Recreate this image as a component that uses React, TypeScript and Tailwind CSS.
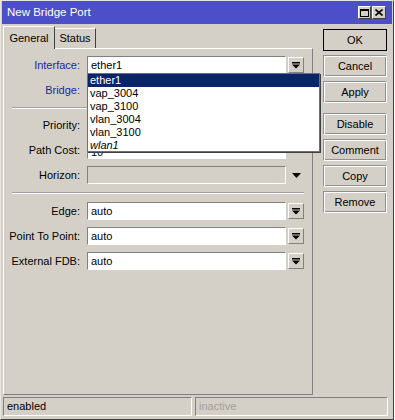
import React from "react";

const font = { fontFamily: '"Liberation Sans", Arial, sans-serif' };

const DropIcon = () => (
    <svg width="8" height="7" viewBox="0 0 8 7">
        <rect x="0" y="0" width="8" height="1.5" fill="#000" />
        <polygon points="0,2.5 8,2.5 4,6.5" fill="#000" />
    </svg>
);

const Field = ({ value, drop = true }: { value: string; drop?: boolean }) => (
    <div className="flex items-center gap-[2px]">
        <div className="w-[199px] h-[18px] bg-white border border-t-[#808080] border-l-[#808080] border-b-white border-r-white flex items-center pl-[3px] text-[11px] text-black">
            {value}
        </div>
        {drop && (
            <div className="w-[16px] h-[16px] border border-t-white border-l-white border-b-[#808080] border-r-[#808080] bg-[#d4d0c8] flex items-center justify-center">
                <DropIcon />
            </div>
        )}
    </div>
);

const Row = ({
    label,
    blue,
    children,
}: {
    label: string;
    blue?: boolean;
    children: React.ReactNode;
}) => (
    <div className="flex items-center h-[18px]">
        <div
            className={`w-[77px] text-right text-[11px] pr-[1px] ${blue ? "text-[#1e1ea8]" : "text-black"}`}
        >
            {label}
        </div>
        <div className="ml-[6px]">{children}</div>
    </div>
);

const Separator = () => (
    <div className="ml-[8px] w-[292px] border-t border-t-[#a0a0a0] border-b border-b-white" />
);

const Btn = ({ label, isDefault }: { label: string; isDefault?: boolean }) => (
    <div
        className={`w-[64px] h-[22px] flex items-center justify-center text-[11px] text-black bg-[#d4d0c8] border ${
            isDefault
                ? "border-black"
                : "border-t-[#909090] border-l-[#909090] border-b-white border-r-white shadow-[inset_1px_1px_0_#fff,inset_-1px_-1px_0_#909090]"
        }`}
    >
        {label}
    </div>
);

const items = ["ether1", "vap_3004", "vap_3100", "vlan_3004", "vlan_3100"];

export default function App() {
    return (
        <div className="w-[395px] h-[420px] bg-white relative" style={font}>
            <div className="w-[394px] h-[420px] bg-[#d4d0c8] border-l border-t border-l-[#e8e6e0] border-t-[#e8e6e0] border-r border-r-[#404040] border-b border-b-[#404040] flex flex-col">
                {/* title bar */}
                <div className="h-[23px] mx-[1px] bg-[#4c4fc8] flex items-center justify-between pl-[5px] pr-[6px]">
                    <span className="text-white text-[11.5px]">New Bridge Port</span>
                    <div className="flex gap-[1px]">
                        <div className="w-[13px] h-[13px] bg-[#d4d0c8] border border-t-white border-l-white border-b-[#404040] border-r-[#404040] flex items-center justify-center">
                            <svg width="9" height="8" viewBox="0 0 9 8">
                                <rect x="0.5" y="0.5" width="8" height="7" fill="none" stroke="#000" />
                                <rect x="0" y="0" width="9" height="2" fill="#000" />
                            </svg>
                        </div>
                        <div className="w-[14px] h-[13px] bg-[#d4d0c8] border border-t-white border-l-white border-b-[#404040] border-r-[#404040] flex items-center justify-center">
                            <svg width="8" height="7" viewBox="0 0 8 7">
                                <path d="M0.5 0.5L7.5 6.5M7.5 0.5L0.5 6.5" stroke="#000" strokeWidth="1.6" />
                            </svg>
                        </div>
                    </div>
                </div>

                {/* body */}
                <div className="flex pt-[2px] pl-[2px]">
                    <div className="w-[310px] flex flex-col">
                        <div className="flex items-end h-[22px]">
                            <div className="w-[52px] h-[23px] -mb-[1px] z-10 bg-[#d4d0c8] border-t border-l border-t-white border-l-white border-r border-r-[#404040] flex items-center justify-center text-[11px] text-black">
                                General
                            </div>
                            <div className="w-[41px] h-[20px] bg-[#d4d0c8] border-t border-t-white border-r border-r-[#404040] flex items-center justify-center text-[11px] text-black">
                                Status
                            </div>
                        </div>
                        <div className="h-[347px] border border-t-white border-l-white border-r-[#808080] border-b-[#808080] pt-[7px] flex flex-col">
                            <div className="flex flex-col gap-[7px]">
                                <Row label="Interface:" blue>
                                    <Field value="ether1" />
                                </Row>
                                <Row label="Bridge:" blue>
                                    <Field value="" />
                                </Row>
                            </div>
                            <div className="mt-[8px] mb-[7px]">
                                <Separator />
                            </div>
                            <div className="flex flex-col gap-[7px]">
                                <Row label="Priority:">
                                    <Field value="" drop={false} />
                                </Row>
                                <Row label="Path Cost:">
                                    <div className="w-[199px] h-[18px] bg-white border border-t-[#808080] border-l-[#808080] border-b-white border-r-white flex items-end pl-[3px] overflow-hidden">
                                        <span className="text-[11px] leading-[11px] text-black">10</span>
                                    </div>
                                </Row>
                                <Row label="Horizon:">
                                    <div className="flex items-center">
                                        <div className="w-[199px] h-[18px] bg-[#d4d0c8] border border-t-[#808080] border-l-[#808080] border-b-white border-r-white" />
                                        <div className="ml-[5px] w-[10px] flex justify-center">
                                            <svg width="9" height="5" viewBox="0 0 9 5">
                                                <polygon points="0,0 9,0 4.5,5" fill="#000" />
                                            </svg>
                                        </div>
                                    </div>
                                </Row>
                            </div>
                            <div className="mt-[8px] mb-[8px]">
                                <Separator />
                            </div>
                            <div className="flex flex-col gap-[7px]">
                                <Row label="Edge:">
                                    <Field value="auto" />
                                </Row>
                                <Row label="Point To Point:">
                                    <Field value="auto" />
                                </Row>
                                <Row label="External FDB:">
                                    <Field value="auto" />
                                </Row>
                            </div>
                        </div>
                    </div>

                    <div className="ml-[10px] mt-[3px] flex flex-col gap-[4px]">
                        <Btn label="OK" isDefault />
                        <Btn label="Cancel" />
                        <Btn label="Apply" />
                        <div className="mt-[6px] flex flex-col gap-[4px]">
                            <Btn label="Disable" />
                            <Btn label="Comment" />
                            <Btn label="Copy" />
                            <Btn label="Remove" />
                        </div>
                    </div>
                </div>

                {/* status bar */}
                <div className="flex gap-[3px] pl-[2px] mt-[2px]">
                    <div className="w-[189px] h-[19px] border border-t-[#808080] border-l-[#808080] border-b-white border-r-white flex items-center pl-[3px] text-[11px] text-black">
                        enabled
                    </div>
                    <div className="w-[193px] h-[19px] border border-t-[#808080] border-l-[#808080] border-b-white border-r-white flex items-center pl-[3px] text-[11px] text-[#a0a0a0]">
                        inactive
                    </div>
                </div>
            </div>

            {/* open interface list */}
            <div className="absolute left-[87px] top-[73px] w-[233px] h-[79px] bg-white border border-[#707070] shadow-[1px_1px_0_#404040] flex flex-col text-[11px]">
                {items.map((it, i) => (
                    <div
                        key={it}
                        className={`h-[13px] leading-[13px] pl-[2px] ${i === 0 ? "bg-[#0a246a] text-white" : "text-black"}`}
                    >
                        {it}
                    </div>
                ))}
                <div className="h-[13px] leading-[13px] pl-[2px] italic text-black">wlan1</div>
            </div>
        </div>
    );
}
